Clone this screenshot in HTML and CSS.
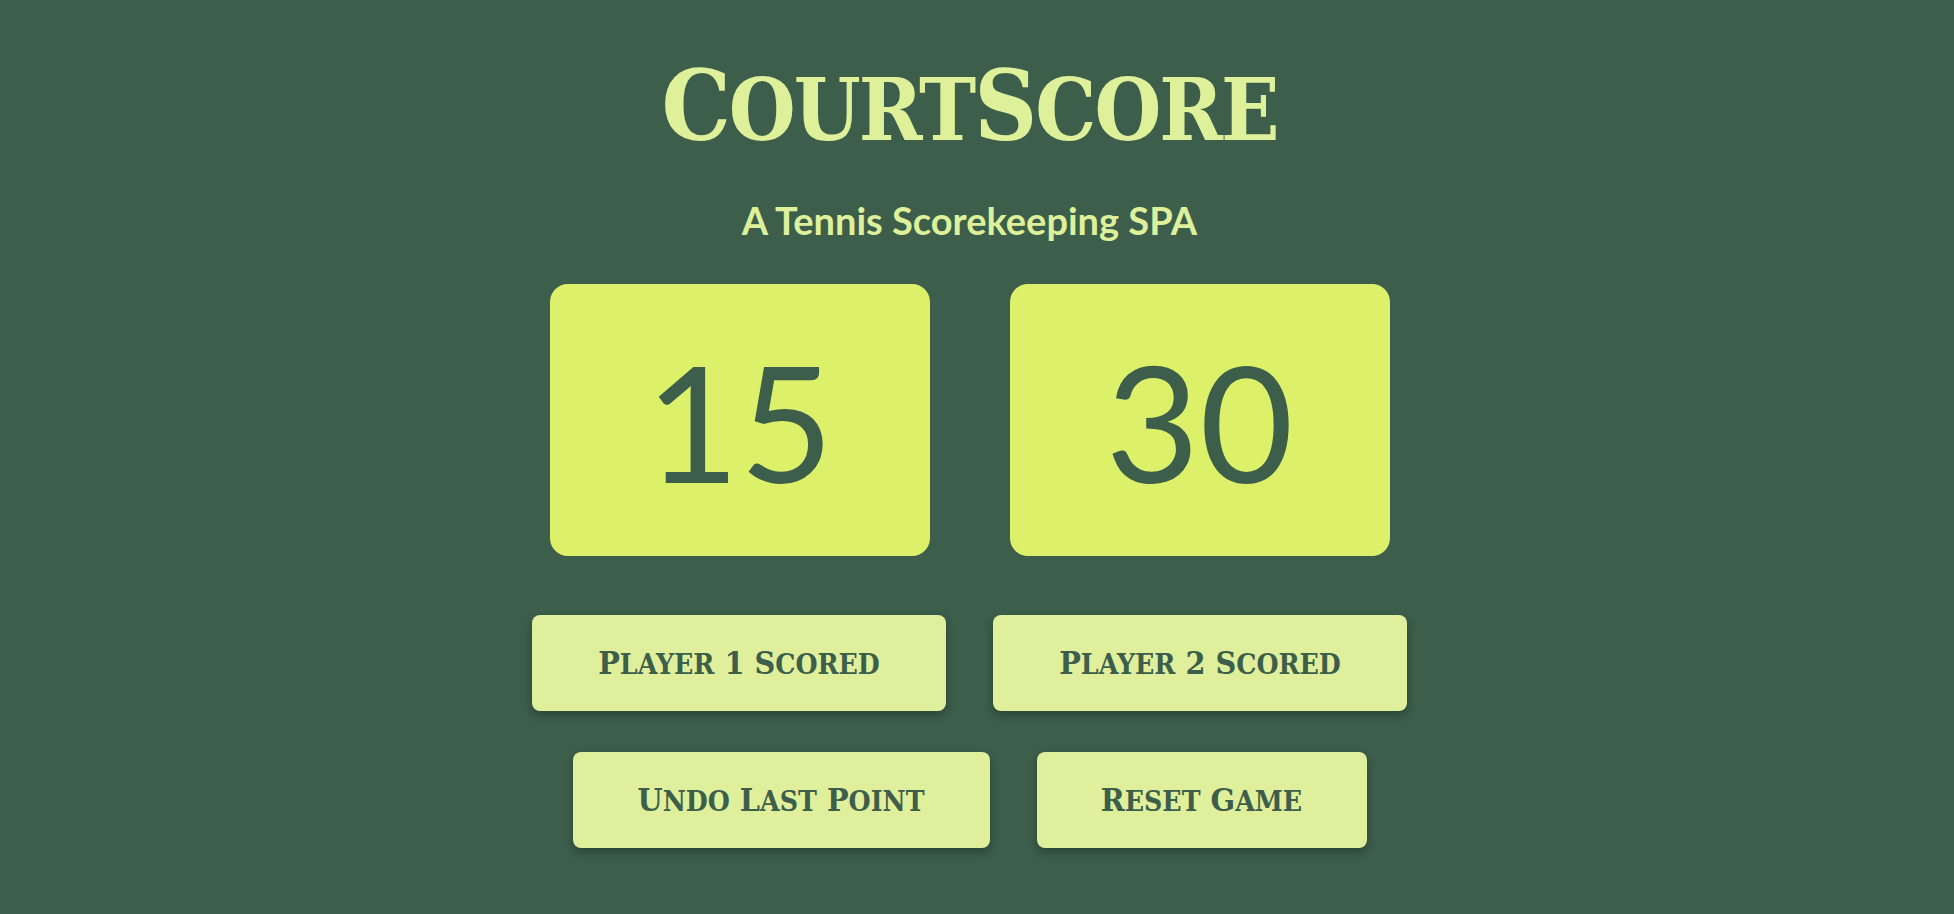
FILE: index.html
```html
<!DOCTYPE html>
<html lang="en">
<head>
<meta charset="utf-8">
<title>CourtScore</title>
<link rel="stylesheet" href="styles.css">
</head>
<body>
<main class="app">
  <h1 class="title">C<span class="sc">ourt</span>S<span class="sc">core</span></h1>
  <p class="subtitle">A Tennis Scorekeeping SPA</p>
  <section class="scoreboard">
    <div class="score">15</div>
    <div class="score">30</div>
  </section>
  <div class="controls">
    <button class="btn btn-player">P<span class="sc">layer</span> 1 S<span class="sc">cored</span></button>
    <button class="btn btn-player">P<span class="sc">layer</span> 2 S<span class="sc">cored</span></button>
  </div>
  <div class="controls">
    <button class="btn btn-undo">U<span class="sc">ndo</span> L<span class="sc">ast</span> P<span class="sc">oint</span></button>
    <button class="btn btn-reset">R<span class="sc">eset</span> G<span class="sc">ame</span></button>
  </div>
</main>
</body>
</html>
```

FILE: styles.css
```css
html, body {
  margin: 0;
  padding: 0;
  background: #3c5e4b;
}

body {
  min-height: 100vh;
  font-family: "Lato", "Noto Sans", sans-serif;
}

.app {
  display: flex;
  flex-direction: column;
  align-items: center;
  padding: 58px 15px 0 0;
}

.title {
  margin: 0;
  font-family: "DejaVu Serif Condensed", "DejaVu Serif", serif;
  font-stretch: condensed;
  font-weight: bold;
  font-size: 97px;
  line-height: 1;
  letter-spacing: -2px;
  color: #dff09b;
}

.sc {
  text-transform: uppercase;
  font-size: 0.88em;
}

.subtitle {
  margin: 43px 0 0;
  font-family: "Lato", sans-serif;
  font-weight: bold;
  font-size: 38px;
  line-height: 1.2;
  color: #dff09b;
}

.scoreboard {
  display: flex;
  gap: 80px;
  margin-top: 40px;
}

.score {
  width: 380px;
  height: 272px;
  border-radius: 18px;
  background: #ddf06a;
  color: #3c5e4b;
  display: flex;
  align-items: center;
  justify-content: center;
  font-family: "Lato", sans-serif;
  font-size: 162px;
  line-height: 1;
  padding-top: 2px;
  box-sizing: border-box;
}

.controls {
  display: flex;
  gap: 47px;
  margin-top: 41px;
}

.controls:first-of-type {
  margin-top: 59px;
}

.btn {
  height: 96px;
  border: none;
  border-radius: 8px;
  background: #dfef9b;
  color: #3c5e4b;
  font-family: "DejaVu Serif Condensed", "DejaVu Serif", serif;
  font-stretch: condensed;
  font-weight: bold;
  font-size: 32px;
  letter-spacing: 0;
  box-shadow: 0 4px 10px rgba(0, 0, 0, 0.3);
  cursor: pointer;
}

.btn-player {
  width: 414px;
}

.btn-undo {
  width: 417px;
}

.btn-reset {
  width: 330px;
}
```
